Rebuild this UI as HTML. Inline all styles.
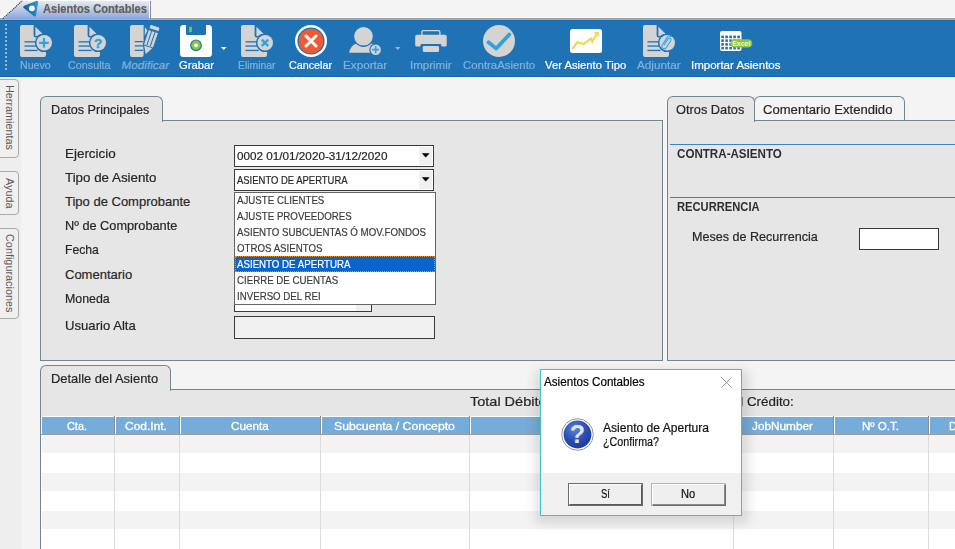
<!DOCTYPE html>
<html><head><meta charset="utf-8"><style>
html,body{margin:0;padding:0;}
body{width:955px;height:549px;position:relative;overflow:hidden;background:#f4f4f4;font-family:"Liberation Sans",sans-serif;}
.r{position:absolute;}
.t{position:absolute;white-space:nowrap;-webkit-text-stroke:0.2px currentColor;}
</style></head><body>
<div class="r" style="left:0px;top:0px;width:955px;height:17px;background:#f4f4f4;"></div>
<div class="r" style="left:0px;top:17px;width:955px;height:1px;background:#fdfdfd;"></div>
<div class="r" style="left:0px;top:18px;width:955px;height:1px;background:#9c9c9c;"></div>
<svg class="r" style="left:0;top:0" width="160" height="20" viewBox="0 0 160 20">
<defs><linearGradient id="tabg" x1="0" y1="0" x2="0" y2="1"><stop offset="0" stop-color="#e4ebf7"/><stop offset="1" stop-color="#8aa6de"/></linearGradient></defs>
<path d="M0,19 L4,18.5 L22,1 L150,1 L150,19 Z" fill="url(#tabg)"/>
<path d="M3,18.5 L22.5,0.5" stroke="#333" stroke-width="1.1" stroke-dasharray="1.2 0.8" fill="none"/>
<path d="M22.5,0.5 L149.5,0.5" stroke="#fff" stroke-width="1" fill="none"/>
<path d="M150.5,1 L150.5,18" stroke="#888" stroke-width="1" fill="none"/>
<path d="M149.5,1 L149.5,18" stroke="#fff" stroke-width="1" fill="none"/>
</svg>
<div class="r" style="left:0px;top:19px;width:955px;height:1px;background:#8eafe5;"></div>
<svg class="r" style="left:22px;top:0" width="18" height="18" viewBox="0 0 18 18">
<defs><linearGradient id="aig" x1="0" y1="0.5" x2="1" y2="0.3"><stop offset="0" stop-color="#14609f"/><stop offset="1" stop-color="#2c93c9"/></linearGradient></defs>
<path d="M2.6,7 L14.8,2.3 L12.7,15.2 Z" fill="url(#aig)" stroke="url(#aig)" stroke-width="2.6" stroke-linejoin="round"/>
<circle cx="9.9" cy="8.3" r="2.9" fill="#fff"/>
</svg>
<div class="t" style="left:42.50px;top:3.34px;font-size:12px;line-height:12px;color:#6a5e4f;font-weight:700;transform:scaleX(0.9284);transform-origin:0 0;">Asientos Contables</div>
<div class="r" style="left:0px;top:20px;width:955px;height:56px;background:#1f73b5;"></div>
<div class="r" style="left:0px;top:20px;width:955px;height:1px;background:#1a6cb0;"></div>
<div class="r" style="left:0px;top:76px;width:955px;height:1px;background:#1166b0;"></div>
<div class="r" style="left:0px;top:77px;width:955px;height:1px;background:#fdfdfb;"></div>
<div class="r" style="left:5px;top:24px;width:2px;height:2px;background:#8fb8e0;"></div>
<div class="r" style="left:5px;top:28px;width:2px;height:2px;background:#8fb8e0;"></div>
<div class="r" style="left:5px;top:32px;width:2px;height:2px;background:#8fb8e0;"></div>
<div class="r" style="left:5px;top:36px;width:2px;height:2px;background:#8fb8e0;"></div>
<div class="r" style="left:5px;top:40px;width:2px;height:2px;background:#8fb8e0;"></div>
<div class="r" style="left:5px;top:44px;width:2px;height:2px;background:#8fb8e0;"></div>
<div class="r" style="left:5px;top:48px;width:2px;height:2px;background:#8fb8e0;"></div>
<div class="r" style="left:5px;top:52px;width:2px;height:2px;background:#8fb8e0;"></div>
<div class="r" style="left:5px;top:56px;width:2px;height:2px;background:#8fb8e0;"></div>
<div class="r" style="left:5px;top:60px;width:2px;height:2px;background:#8fb8e0;"></div>
<div class="r" style="left:5px;top:64px;width:2px;height:2px;background:#8fb8e0;"></div>
<div class="r" style="left:5px;top:68px;width:2px;height:2px;background:#8fb8e0;"></div>
<svg class="r" style="left:20px;top:25px" width="34" height="34" viewBox="0 0 34 34"><path d="M2,0 H13.6 V10 Q13.6,12.6 16.5,12.6 H26 V30 Q26,32 24,32 H2 Q0,32 0,30 V2 Q0,0 2,0 Z" fill="#d4d4d4"/>
<path d="M15.4,1.8 L22.6,8.7 Q19.5,8.9 17.8,10.4 Q16.6,11.3 15.4,11 Z" fill="#d4d4d4"/>
<rect x="4.5" y="16.2" width="13" height="1.3" fill="#1f73b5"/>
<rect x="4.5" y="20.4" width="13" height="1.3" fill="#1f73b5"/>
<rect x="4.5" y="24.8" width="13" height="1.3" fill="#1f73b5"/>
<circle cx="24.2" cy="17.8" r="9.3" fill="#1f73b5"/>
<circle cx="24.2" cy="17.8" r="7.8" fill="#d4d4d4"/>
<path d="M24,13 V22.6 M19.2,17.8 H28.8" stroke="#2aa4e2" stroke-width="2.2"/></svg>
<svg class="r" style="left:74px;top:25px" width="34" height="34" viewBox="0 0 34 34"><path d="M2,0 H13.6 V10 Q13.6,12.6 16.5,12.6 H26 V30 Q26,32 24,32 H2 Q0,32 0,30 V2 Q0,0 2,0 Z" fill="#d4d4d4"/>
<path d="M15.4,1.8 L22.6,8.7 Q19.5,8.9 17.8,10.4 Q16.6,11.3 15.4,11 Z" fill="#d4d4d4"/>
<rect x="4.5" y="16.2" width="13" height="1.3" fill="#1f73b5"/>
<rect x="4.5" y="20.4" width="13" height="1.3" fill="#1f73b5"/>
<rect x="4.5" y="24.8" width="13" height="1.3" fill="#1f73b5"/>
<circle cx="24.2" cy="17.8" r="9.3" fill="#1f73b5"/>
<circle cx="24.2" cy="17.8" r="7.8" fill="#d4d4d4"/>
<text x="24.2" y="23.2" font-family="Liberation Sans" font-weight="700" font-size="13.5" fill="#2aa4e2" stroke="#2aa4e2" stroke-width="0.5" text-anchor="middle">?</text></svg>
<svg class="r" style="left:130px;top:25px" width="34" height="34" viewBox="0 0 34 34"><path d="M2,0 H13.6 V30 Q13.6,32 11.6,32 H2 Q0,32 0,30 V2 Q0,0 2,0 Z" fill="#d4d4d4"/>
<path d="M14.8,2.2 L17.6,5.2 L14.8,11 Z" fill="#d4d4d4"/>
<path d="M4.8,16.7 H13 M4.8,20.9 H13 M4.8,25.4 H13" stroke="#1f73b5" stroke-width="1.3"/>
<g transform="translate(25.3,0.8) rotate(18.7)">
<path d="M-5.3,1.5 Q-5.3,0 -3.8,0 H3.8 Q5.3,0 5.3,1.5 V4.6 H-5.3 Z" fill="#d4d4d4" stroke="#1f73b5" stroke-width="1.1"/>
<path d="M-5.3,5.6 H5.3 V21.5 L0,31 L-5.3,21.5 Z" fill="#d4d4d4" stroke="#1f73b5" stroke-width="1.1" stroke-linejoin="round"/>
<path d="M-1.8,6 V21 M1.8,6 V21" stroke="#1f73b5" stroke-width="1"/>
<path d="M-5.3,21.8 H5.3" stroke="#1f73b5" stroke-width="1"/>
</g></svg>
<svg class="r" style="left:180px;top:25px" width="32" height="32" viewBox="0 0 32 32"><path d="M3.5,0 H6 V9 Q6,10 7,10 H25 Q26,10 26,9 V0 H28.5 Q32,0 32,3.5 V28.5 Q32,32 28.5,32 H3.5 Q0,32 0,28.5 V3.5 Q0,0 3.5,0 Z" fill="#fff"/>
<rect x="9.2" y="1.7" width="2.6" height="5.5" rx="0.8" fill="#8cc63f"/>
<circle cx="16" cy="20.3" r="5.9" fill="#1f73b5"/>
<circle cx="16" cy="20.3" r="4.7" fill="#8cc63f"/>
<circle cx="16" cy="20.3" r="1.9" fill="#fff"/></svg>
<svg class="r" style="left:221px;top:47px" width="6" height="4" viewBox="0 0 6 4"><path d="M0,0 H5.5 L2.75,3 Z" fill="#fff"/></svg>
<svg class="r" style="left:241px;top:25px" width="34" height="34" viewBox="0 0 34 34"><path d="M2,0 H13.6 V10 Q13.6,12.6 16.5,12.6 H26 V30 Q26,32 24,32 H2 Q0,32 0,30 V2 Q0,0 2,0 Z" fill="#d4d4d4"/>
<path d="M15.4,1.8 L22.6,8.7 Q19.5,8.9 17.8,10.4 Q16.6,11.3 15.4,11 Z" fill="#d4d4d4"/>
<rect x="4.5" y="16.2" width="13" height="1.3" fill="#1f73b5"/>
<rect x="4.5" y="20.4" width="13" height="1.3" fill="#1f73b5"/>
<rect x="4.5" y="24.8" width="13" height="1.3" fill="#1f73b5"/>
<circle cx="24.2" cy="17.8" r="9.3" fill="#1f73b5"/>
<circle cx="24.2" cy="17.8" r="7.8" fill="#d4d4d4"/>
<path d="M20.8,14.6 L27.2,21 M27.2,14.6 L20.8,21" stroke="#2aa4e2" stroke-width="2.4"/></svg>
<svg class="r" style="left:295px;top:25px" width="32" height="32" viewBox="0 0 32 32"><circle cx="16" cy="16" r="16" fill="#fff"/>
<circle cx="16" cy="16" r="13.6" fill="#1f73b5"/>
<circle cx="16" cy="16" r="12.3" fill="#ee5a34"/>
<path d="M11,11 L21,21 M21,11 L11,21" stroke="#fff" stroke-width="3" stroke-linecap="round"/></svg>
<svg class="r" style="left:349px;top:27px" width="34" height="34" viewBox="0 0 34 34"><path d="M0.2,25.8 Q0.8,19.5 8.5,15.6 H21 Q24.5,17 26.5,20 L25,25.8 Z" fill="#d4d4d4"/>
<circle cx="14.5" cy="9.3" r="10.7" fill="#1f73b5"/>
<circle cx="14.5" cy="9.3" r="9.3" fill="#d4d4d4"/>
<circle cx="26.7" cy="22.7" r="6.4" fill="#1f73b5"/>
<circle cx="26.7" cy="22.7" r="5.2" fill="#d4d4d4"/>
<path d="M26.7,19.1 V26.3 M23.1,22.7 H30.3" stroke="#2aa4e2" stroke-width="1.7"/></svg>
<svg class="r" style="left:395px;top:47px" width="6" height="4" viewBox="0 0 6 4"><path d="M0,0 H5.5 L2.75,3 Z" fill="#8ab8e2"/></svg>
<svg class="r" style="left:415px;top:30px" width="32" height="24" viewBox="0 0 32 24"><path d="M6.9,5 V2.2 Q6.9,0.7 8.4,0.7 H23.4 Q24.9,0.7 24.9,2.2 V5" stroke="#d4d4d4" stroke-width="1.3" fill="none"/>
<path d="M1.8,4.8 H29.9 Q31.7,4.8 31.7,6.6 V15 Q31.7,16.6 30.1,16.6 H27.6 Q26.1,16.6 26.1,15 V14.1 H5.7 V15 Q5.7,16.6 4.2,16.6 H1.8 Q0.2,16.6 0.2,15 V6.6 Q0.2,4.8 1.8,4.8 Z" fill="#d4d4d4"/>
<path d="M9.2,15.9 H22.6 Q24,15.9 24,17.3 V20.7 Q24,22.1 22.6,22.1 H9.2 Q7.8,22.1 7.8,20.7 V17.3 Q7.8,15.9 9.2,15.9 Z" fill="#d4d4d4"/></svg>
<svg class="r" style="left:483px;top:25px" width="32" height="32" viewBox="0 0 32 32"><circle cx="16" cy="16" r="16" fill="#d4d4d4"/>
<path d="M5.5,17.3 L13.2,23.5 L26.3,9.5" stroke="#2aa4e2" stroke-width="3.7" stroke-linecap="round" stroke-linejoin="round" fill="none"/></svg>
<svg class="r" style="left:570px;top:29px" width="32" height="24" viewBox="0 0 32 24"><rect x="0" y="0" width="32" height="24" rx="2.5" fill="#fff"/>
<path d="M2.2,20 L7.4,13.4 L13.6,15.1 L20.9,9.6 L22.3,12.7 L27.1,4.6" stroke="#f4d65a" stroke-width="2.3" fill="none" stroke-linejoin="miter"/>
<path d="M23.5,3.6 L28.8,2.5 L29.3,7.6 Z" fill="#f4d65a"/></svg>
<svg class="r" style="left:643px;top:25px" width="34" height="34" viewBox="0 0 34 34"><path d="M2,0 H13.6 V10 Q13.6,12.6 16.5,12.6 H26 V30 Q26,32 24,32 H2 Q0,32 0,30 V2 Q0,0 2,0 Z" fill="#d4d4d4"/>
<path d="M15.4,1.8 L22.6,8.7 Q19.5,8.9 17.8,10.4 Q16.6,11.3 15.4,11 Z" fill="#d4d4d4"/>
<rect x="4.5" y="16.2" width="13" height="1.3" fill="#1f73b5"/>
<rect x="4.5" y="20.4" width="13" height="1.3" fill="#1f73b5"/>
<rect x="4.5" y="24.8" width="13" height="1.3" fill="#1f73b5"/>
<circle cx="24.2" cy="17.8" r="9.3" fill="#1f73b5"/>
<circle cx="24.2" cy="17.8" r="7.8" fill="#d4d4d4"/>
<g transform="translate(23.8,17.6) rotate(33)"><path d="M-0.9,3.8 V-3.6 Q-0.9,-5.4 0.7,-5.4 Q2.3,-5.4 2.3,-3.6 V4.4 Q2.3,6.9 0,6.9 Q-2.5,6.9 -2.5,4.4 V-4.6 Q-2.5,-7.3 0.6,-7.3" stroke="#2aa4e2" stroke-width="1.05" fill="none"/></g></svg>
<svg class="r" style="left:720px;top:31px" width="34" height="22" viewBox="0 0 34 22"><rect x="0" y="0" width="21.5" height="20" rx="2" fill="#fff"/>
<g fill="#1f73b5">
<rect x="1.3" y="4.6" width="2.6" height="2.6"/><rect x="1.3" y="8.35" width="2.6" height="2.6"/><rect x="1.3" y="12.1" width="2.6" height="2.6"/><rect x="1.3" y="15.85" width="2.6" height="2.6"/><rect x="5.3" y="4.6" width="2.6" height="2.6"/><rect x="5.3" y="8.35" width="2.6" height="2.6"/><rect x="5.3" y="12.1" width="2.6" height="2.6"/><rect x="5.3" y="15.85" width="2.6" height="2.6"/><rect x="9.3" y="4.6" width="2.6" height="2.6"/><rect x="9.3" y="8.35" width="2.6" height="2.6"/><rect x="9.3" y="12.1" width="2.6" height="2.6"/><rect x="9.3" y="15.85" width="2.6" height="2.6"/><rect x="13.3" y="4.6" width="2.6" height="2.6"/><rect x="13.3" y="8.35" width="2.6" height="2.6"/><rect x="13.3" y="12.1" width="2.6" height="2.6"/><rect x="13.3" y="15.85" width="2.6" height="2.6"/><rect x="17.3" y="4.6" width="2.6" height="2.6"/><rect x="17.3" y="8.35" width="2.6" height="2.6"/><rect x="17.3" y="12.1" width="2.6" height="2.6"/><rect x="17.3" y="15.85" width="2.6" height="2.6"/>
</g>
<rect x="10.3" y="8.2" width="22" height="8.4" rx="4.2" fill="#8cc63f"/>
<text x="21.3" y="15" font-family="Liberation Sans" font-weight="700" font-size="7" fill="#f2f7e8" text-anchor="middle">Excel</text></svg>
<div class="t" style="left:20.20px;top:60.49px;font-size:11px;line-height:11px;color:#82b2dc;font-weight:400;transform:scaleX(0.9655);transform-origin:0 0;">Nuevo</div>
<div class="t" style="left:68.00px;top:60.49px;font-size:11px;line-height:11px;color:#82b2dc;font-weight:400;transform:scaleX(0.9789);transform-origin:0 0;">Consulta</div>
<div class="t" style="left:121.00px;top:60.49px;font-size:11px;line-height:11px;color:#82b2dc;font-weight:400;transform:scaleX(1.0644) skewX(-9deg);transform-origin:0 9.3px;">Modificar</div>
<div class="t" style="left:178.50px;top:60.49px;font-size:11px;line-height:11px;color:#ffffff;font-weight:400;transform:scaleX(1.0194);transform-origin:0 0;">Grabar</div>
<div class="t" style="left:237.50px;top:60.49px;font-size:11px;line-height:11px;color:#82b2dc;font-weight:400;transform:scaleX(0.9438);transform-origin:0 0;">Eliminar</div>
<div class="t" style="left:288.90px;top:60.49px;font-size:11px;line-height:11px;color:#ffffff;font-weight:400;transform:scaleX(0.9768);transform-origin:0 0;">Cancelar</div>
<div class="t" style="left:343.30px;top:60.49px;font-size:11px;line-height:11px;color:#82b2dc;font-weight:400;transform:scaleX(1.0632);transform-origin:0 0;">Exportar</div>
<div class="t" style="left:410.10px;top:60.49px;font-size:11px;line-height:11px;color:#82b2dc;font-weight:400;transform:scaleX(1.0474);transform-origin:0 0;">Imprimir</div>
<div class="t" style="left:463.00px;top:60.49px;font-size:11px;line-height:11px;color:#82b2dc;font-weight:400;transform:scaleX(1.0357);transform-origin:0 0;">ContraAsiento</div>
<div class="t" style="left:544.50px;top:60.49px;font-size:11px;line-height:11px;color:#ffffff;font-weight:400;transform:scaleX(1.0226);transform-origin:0 0;">Ver Asiento Tipo</div>
<div class="t" style="left:637.00px;top:60.49px;font-size:11px;line-height:11px;color:#82b2dc;font-weight:400;transform:scaleX(1.0641);transform-origin:0 0;">Adjuntar</div>
<div class="t" style="left:690.50px;top:60.49px;font-size:11px;line-height:11px;color:#ffffff;font-weight:400;transform:scaleX(1.0456);transform-origin:0 0;">Importar Asientos</div>
<div class="r" style="left:0px;top:78px;width:21px;height:471px;background:#eeeeee;"></div>
<div class="r" style="left:21px;top:78px;width:934px;height:471px;background:#f4f4f4;"></div>
<div class="r" style="left:-4px;top:79px;width:23px;height:79px;border:1px solid #a9a9a9;border-radius:0 4px 4px 0;background:#f0f0f0;box-sizing:border-box;"></div>
<div class="t" style="left:14.5px;top:85px;font-size:11px;line-height:11px;color:#5a5a5a;-webkit-text-stroke:0;transform-origin:0 0;transform:rotate(90deg) scaleX(0.9845);">Herramientas</div>
<div class="r" style="left:-4px;top:171px;width:23px;height:44px;border:1px solid #a9a9a9;border-radius:0 4px 4px 0;background:#f0f0f0;box-sizing:border-box;"></div>
<div class="t" style="left:14.5px;top:177.5px;font-size:11px;line-height:11px;color:#5a5a5a;-webkit-text-stroke:0;transform-origin:0 0;transform:rotate(90deg) scaleX(0.9841);">Ayuda</div>
<div class="r" style="left:-4px;top:228px;width:23px;height:91px;border:1px solid #a9a9a9;border-radius:0 4px 4px 0;background:#f0f0f0;box-sizing:border-box;"></div>
<div class="t" style="left:14.5px;top:234px;font-size:11px;line-height:11px;color:#5a5a5a;-webkit-text-stroke:0;transform-origin:0 0;transform:rotate(90deg) scaleX(0.9875);">Configuraciones</div>
<div class="r" style="left:40px;top:120px;width:623px;height:241px;background:#e6e6e6;border:1px solid #72868f;box-sizing:border-box;"></div>
<div class="r" style="left:40px;top:96px;width:123px;height:26px;background:#e6e6e6;border:1px solid #72868f;border-bottom:none;border-radius:6px 6px 0 0;box-sizing:border-box;"></div>
<div class="t" style="left:51.20px;top:103.00px;font-size:13px;line-height:13px;color:#262626;font-weight:400;transform:scaleX(0.9727);transform-origin:0 0;">Datos Principales</div>
<div class="t" style="left:65.00px;top:147.00px;font-size:13px;line-height:13px;color:#262626;font-weight:400;transform:scaleX(1.0320);transform-origin:0 0;">Ejercicio</div>
<div class="t" style="left:65.00px;top:171.00px;font-size:13px;line-height:13px;color:#262626;font-weight:400;transform:scaleX(1.0265);transform-origin:0 0;">Tipo de Asiento</div>
<div class="t" style="left:65.00px;top:195.00px;font-size:13px;line-height:13px;color:#262626;font-weight:400;">Tipo de Comprobante</div>
<div class="t" style="left:65.00px;top:219.00px;font-size:13px;line-height:13px;color:#262626;font-weight:400;transform:scaleX(0.9800);transform-origin:0 0;">Nº de Comprobante</div>
<div class="t" style="left:65.00px;top:243.00px;font-size:13px;line-height:13px;color:#262626;font-weight:400;transform:scaleX(0.9327);transform-origin:0 0;">Fecha</div>
<div class="t" style="left:65.00px;top:268.00px;font-size:13px;line-height:13px;color:#262626;font-weight:400;">Comentario</div>
<div class="t" style="left:65.00px;top:292.00px;font-size:13px;line-height:13px;color:#262626;font-weight:400;transform:scaleX(0.9515);transform-origin:0 0;">Moneda</div>
<div class="t" style="left:65.00px;top:319.00px;font-size:13px;line-height:13px;color:#262626;font-weight:400;transform:scaleX(1.0101);transform-origin:0 0;">Usuario Alta</div>
<div class="r" style="left:234px;top:145px;width:200px;height:22px;background:#fff;border:1px solid #3a3a3a;box-sizing:border-box;"></div>
<div class="r" style="left:419px;top:147px;width:13px;height:18px;background:#f0f0f0;"></div>
<svg class="r" style="left:421px;top:152.8px" width="9" height="6" viewBox="0 0 9 6"><path d="M0.8,0.2 H8.6 L4.7,4.6 Z" fill="#000"/></svg>
<div class="t" style="left:237.00px;top:150.99px;font-size:11px;line-height:11px;color:#262626;font-weight:400;transform:scaleX(1.0644);transform-origin:0 0;">0002 01/01/2020-31/12/2020</div>
<div class="r" style="left:234px;top:169px;width:200px;height:22px;background:#fff;border:1px solid #3a3a3a;box-sizing:border-box;"></div>
<div class="r" style="left:419px;top:171px;width:13px;height:18px;background:#f0f0f0;"></div>
<svg class="r" style="left:421px;top:176.8px" width="9" height="6" viewBox="0 0 9 6"><path d="M0.8,0.2 H8.6 L4.7,4.6 Z" fill="#000"/></svg>
<div class="t" style="left:237.00px;top:174.69px;font-size:11px;line-height:11px;color:#262626;font-weight:400;transform:scaleX(0.8602);transform-origin:0 0;">ASIENTO DE APERTURA</div>
<div class="r" style="left:234px;top:290px;width:138px;height:22px;background:#fff;border:1px solid #3a3a3a;box-sizing:border-box;"></div>
<div class="r" style="left:356px;top:291px;width:15px;height:20px;background:#f0f0f0;"></div>
<div class="r" style="left:234px;top:316px;width:201px;height:23px;background:#f0f0f0;border:1px solid #3a3a3a;box-sizing:border-box;"></div>
<div class="r" style="left:234px;top:192px;width:202px;height:113px;background:#fff;border:1px solid #646464;box-sizing:border-box;"></div>
<div class="r" style="left:235px;top:256px;width:200px;height:16px;background:#0b63cc;outline:1px dotted #e8922e;outline-offset:-1px;"></div>
<div class="t" style="left:237.30px;top:194.89px;font-size:11px;line-height:11px;color:#3c3c3c;font-weight:400;transform:scaleX(0.8818);transform-origin:0 0;">AJUSTE CLIENTES</div>
<div class="t" style="left:237.30px;top:210.89px;font-size:11px;line-height:11px;color:#3c3c3c;font-weight:400;transform:scaleX(0.8818);transform-origin:0 0;">AJUSTE PROVEEDORES</div>
<div class="t" style="left:237.30px;top:226.89px;font-size:11px;line-height:11px;color:#3c3c3c;font-weight:400;transform:scaleX(0.8818);transform-origin:0 0;">ASIENTO SUBCUENTAS Ó MOV.FONDOS</div>
<div class="t" style="left:237.30px;top:242.89px;font-size:11px;line-height:11px;color:#3c3c3c;font-weight:400;transform:scaleX(0.8818);transform-origin:0 0;">OTROS ASIENTOS</div>
<div class="t" style="left:237.30px;top:258.89px;font-size:11px;line-height:11px;color:#ffffff;font-weight:400;transform:scaleX(0.8818);transform-origin:0 0;">ASIENTO DE APERTURA</div>
<div class="t" style="left:237.30px;top:274.89px;font-size:11px;line-height:11px;color:#3c3c3c;font-weight:400;transform:scaleX(0.8818);transform-origin:0 0;">CIERRE DE CUENTAS</div>
<div class="t" style="left:237.30px;top:290.89px;font-size:11px;line-height:11px;color:#3c3c3c;font-weight:400;transform:scaleX(0.8818);transform-origin:0 0;">INVERSO DEL REI</div>
<div class="r" style="left:667px;top:120px;width:300px;height:241px;background:#e6e6e6;border:1px solid #72868f;box-sizing:border-box;"></div>
<div class="r" style="left:754px;top:96px;width:151px;height:24px;background:#f4f4f4;border:1px solid #72868f;border-bottom:none;border-radius:6px 6px 0 0;box-sizing:border-box;"></div>
<div class="r" style="left:754px;top:120px;width:151px;height:1px;background:#72868f;"></div>
<div class="r" style="left:667px;top:96px;width:88px;height:26px;background:#e6e6e6;border:1px solid #72868f;border-bottom:none;border-radius:6px 6px 0 0;box-sizing:border-box;"></div>
<div class="t" style="left:675.50px;top:102.60px;font-size:13px;line-height:13px;color:#262626;font-weight:400;transform:scaleX(0.9848);transform-origin:0 0;">Otros Datos</div>
<div class="t" style="left:763.30px;top:102.60px;font-size:13px;line-height:13px;color:#262626;font-weight:400;transform:scaleX(1.0060);transform-origin:0 0;">Comentario Extendido</div>
<div class="r" style="left:670px;top:144px;width:285px;height:1px;background:#3a84c4;"></div>
<div class="t" style="left:676.60px;top:147.49px;font-size:13.6px;line-height:13.6px;color:#2e2e2e;font-weight:700;transform:scaleX(0.8535);transform-origin:0 0;-webkit-text-stroke:0;">CONTRA-ASIENTO</div>
<div class="r" style="left:670px;top:197px;width:285px;height:1px;background:#3a84c4;"></div>
<div class="t" style="left:676.60px;top:200.09px;font-size:13.6px;line-height:13.6px;color:#2e2e2e;font-weight:700;transform:scaleX(0.8219);transform-origin:0 0;-webkit-text-stroke:0;">RECURRENCIA</div>
<div class="t" style="left:692.40px;top:230.00px;font-size:13px;line-height:13px;color:#262626;font-weight:400;transform:scaleX(0.9672);transform-origin:0 0;">Meses de Recurrencia</div>
<div class="r" style="left:859px;top:228px;width:80px;height:22px;background:#fff;border:1px solid #3a3a3a;box-sizing:border-box;"></div>
<div class="r" style="left:40px;top:389px;width:930px;height:170px;background:#ffffff;border:1px solid #72868f;box-sizing:border-box;"></div>
<div class="r" style="left:41px;top:390px;width:914px;height:26px;background:#e6e6e6;"></div>
<div class="r" style="left:40px;top:365px;width:131px;height:26px;background:#e6e6e6;border:1px solid #72868f;border-bottom:none;border-radius:6px 6px 0 0;box-sizing:border-box;"></div>
<div class="t" style="left:51.40px;top:372.00px;font-size:13px;line-height:13px;color:#262626;font-weight:400;transform:scaleX(0.9946);transform-origin:0 0;">Detalle del Asiento</div>
<div class="t" style="left:470.40px;top:394.80px;font-size:13px;line-height:13px;color:#262626;font-weight:400;transform:scaleX(1.1143);transform-origin:0 0;">Total Débito</div>
<div class="t" style="left:715.05px;top:394.80px;font-size:13px;line-height:13px;color:#262626;font-weight:400;transform:scaleX(1.0281);transform-origin:0 0;">Total Crédito:</div>
<div class="r" style="left:41px;top:416px;width:914px;height:1px;background:#ffffff;"></div>
<div class="r" style="left:41px;top:416px;width:1px;height:140px;background:#ffffff;"></div>
<div class="r" style="left:42px;top:417px;width:913px;height:17px;background:#76acd9;"></div>
<div class="r" style="left:41px;top:434px;width:914px;height:1px;background:#9c9c9c;"></div>
<div class="r" style="left:42px;top:435px;width:913px;height:18px;background:#f3f3f3;"></div>
<div class="r" style="left:42px;top:473px;width:913px;height:18px;background:#f3f3f3;"></div>
<div class="r" style="left:42px;top:511px;width:913px;height:18px;background:#f3f3f3;"></div>
<div class="r" style="left:114px;top:416px;width:1px;height:18px;background:#8c8c8c;"></div>
<div class="r" style="left:115px;top:417px;width:1px;height:17px;background:#ffffff;"></div>
<div class="r" style="left:114px;top:435px;width:1px;height:120px;background:#dcdcdc;"></div>
<div class="r" style="left:179px;top:416px;width:1px;height:18px;background:#8c8c8c;"></div>
<div class="r" style="left:180px;top:417px;width:1px;height:17px;background:#ffffff;"></div>
<div class="r" style="left:179px;top:435px;width:1px;height:120px;background:#dcdcdc;"></div>
<div class="r" style="left:320px;top:416px;width:1px;height:18px;background:#8c8c8c;"></div>
<div class="r" style="left:321px;top:417px;width:1px;height:17px;background:#ffffff;"></div>
<div class="r" style="left:320px;top:435px;width:1px;height:120px;background:#dcdcdc;"></div>
<div class="r" style="left:469px;top:416px;width:1px;height:18px;background:#8c8c8c;"></div>
<div class="r" style="left:470px;top:417px;width:1px;height:17px;background:#ffffff;"></div>
<div class="r" style="left:469px;top:435px;width:1px;height:120px;background:#dcdcdc;"></div>
<div class="r" style="left:733px;top:416px;width:1px;height:18px;background:#8c8c8c;"></div>
<div class="r" style="left:734px;top:417px;width:1px;height:17px;background:#ffffff;"></div>
<div class="r" style="left:733px;top:435px;width:1px;height:120px;background:#dcdcdc;"></div>
<div class="r" style="left:833px;top:416px;width:1px;height:18px;background:#8c8c8c;"></div>
<div class="r" style="left:834px;top:417px;width:1px;height:17px;background:#ffffff;"></div>
<div class="r" style="left:833px;top:435px;width:1px;height:120px;background:#dcdcdc;"></div>
<div class="r" style="left:928px;top:416px;width:1px;height:18px;background:#8c8c8c;"></div>
<div class="r" style="left:929px;top:417px;width:1px;height:17px;background:#ffffff;"></div>
<div class="r" style="left:928px;top:435px;width:1px;height:120px;background:#dcdcdc;"></div>
<div class="t" style="left:67.40px;top:420.52px;font-size:11.2px;line-height:11.2px;color:#ffffff;font-weight:400;transform:scaleX(0.9737);transform-origin:0 0;-webkit-text-stroke:0.3px #fff;">Cta.</div>
<div class="t" style="left:125.30px;top:420.52px;font-size:11.2px;line-height:11.2px;color:#ffffff;font-weight:400;transform:scaleX(1.0708);transform-origin:0 0;-webkit-text-stroke:0.3px #fff;">Cod.Int.</div>
<div class="t" style="left:230.90px;top:420.52px;font-size:11.2px;line-height:11.2px;color:#ffffff;font-weight:400;transform:scaleX(1.0466);transform-origin:0 0;-webkit-text-stroke:0.3px #fff;">Cuenta</div>
<div class="t" style="left:334.10px;top:420.52px;font-size:11.2px;line-height:11.2px;color:#ffffff;font-weight:400;transform:scaleX(1.0917);transform-origin:0 0;-webkit-text-stroke:0.3px #fff;">Subcuenta / Concepto</div>
<div class="t" style="left:752.30px;top:420.52px;font-size:11.2px;line-height:11.2px;color:#ffffff;font-weight:400;transform:scaleX(1.0536);transform-origin:0 0;-webkit-text-stroke:0.3px #fff;">JobNumber</div>
<div class="t" style="left:862.00px;top:420.52px;font-size:11.2px;line-height:11.2px;color:#ffffff;font-weight:400;transform:scaleX(1.0328);transform-origin:0 0;-webkit-text-stroke:0.3px #fff;">Nº O.T.</div>
<div class="t" style="left:949.00px;top:420.52px;font-size:11.2px;line-height:11.2px;color:#ffffff;font-weight:400;transform:scaleX(0.9891);transform-origin:0 0;-webkit-text-stroke:0.3px #fff;">D</div>
<div class="r" style="left:536px;top:371px;width:212px;height:152px;background:rgba(0,0,0,0.12);filter:blur(6px);"></div>
<div class="r" style="left:540px;top:369px;width:202px;height:147px;background:#fff;border:1px solid #3ec4c8;box-sizing:border-box;"></div>
<div class="r" style="left:541px;top:473px;width:200px;height:42px;background:#f0f0f0;"></div>
<div class="t" style="left:544.00px;top:376.24px;font-size:12px;line-height:12px;color:#000;font-weight:400;transform:scaleX(0.9720);transform-origin:0 0;">Asientos Contables</div>
<svg class="r" style="left:721px;top:377px" width="11" height="11" viewBox="0 0 11 11"><path d="M0.5,0.5 L10.5,10.5 M10.5,0.5 L0.5,10.5" stroke="#999" stroke-width="1"/></svg>
<svg class="r" style="left:561px;top:418px" width="33" height="33" viewBox="0 0 33 33">
<defs><radialGradient id="qg" cx="0.4" cy="0.3" r="0.75"><stop offset="0" stop-color="#5a82d8"/><stop offset="0.55" stop-color="#2a50b4"/><stop offset="1" stop-color="#1a3a98"/></radialGradient></defs>
<circle cx="16.5" cy="16.5" r="15.8" fill="#fff" stroke="#8a8a8a" stroke-width="0.9"/>
<circle cx="16.5" cy="16.5" r="13.9" fill="url(#qg)"/>
<text x="16.5" y="25.2" font-family="Liberation Sans" font-weight="700" font-size="25" fill="#e4e4e4" text-anchor="middle">?</text>
</svg>
<div class="t" style="left:603.20px;top:422.04px;font-size:12px;line-height:12px;color:#111;font-weight:400;transform:scaleX(1.0056);transform-origin:0 0;">Asiento de Apertura</div>
<div class="t" style="left:603.20px;top:435.84px;font-size:12px;line-height:12px;color:#111;font-weight:400;transform:scaleX(0.8933);transform-origin:0 0;">¿Confirma?</div>
<div class="r" style="left:569px;top:484px;width:73px;height:21px;background:#efefef;border-style:solid;border-width:1px;border-color:#fff #5a5a5a #5a5a5a #fff;box-shadow:0 0 0 1px #6c6c6c;box-sizing:border-box;"></div>
<div class="r" style="left:652px;top:484px;width:73px;height:21px;background:#efefef;border-style:solid;border-width:1px;border-color:#fff #8a8a8a #8a8a8a #fff;box-shadow:1px 1px 0 0 #6c6c6c,0 0 0 1px #b4b4b4;box-sizing:border-box;"></div>
<div class="t" style="left:601.30px;top:487.84px;font-size:12px;line-height:12px;color:#111;font-weight:400;transform:scaleX(0.7938);transform-origin:0 0;">Sí</div>
<div class="t" style="left:681.30px;top:487.84px;font-size:12px;line-height:12px;color:#111;font-weight:400;transform:scaleX(0.9257);transform-origin:0 0;">No</div>
</body></html>
